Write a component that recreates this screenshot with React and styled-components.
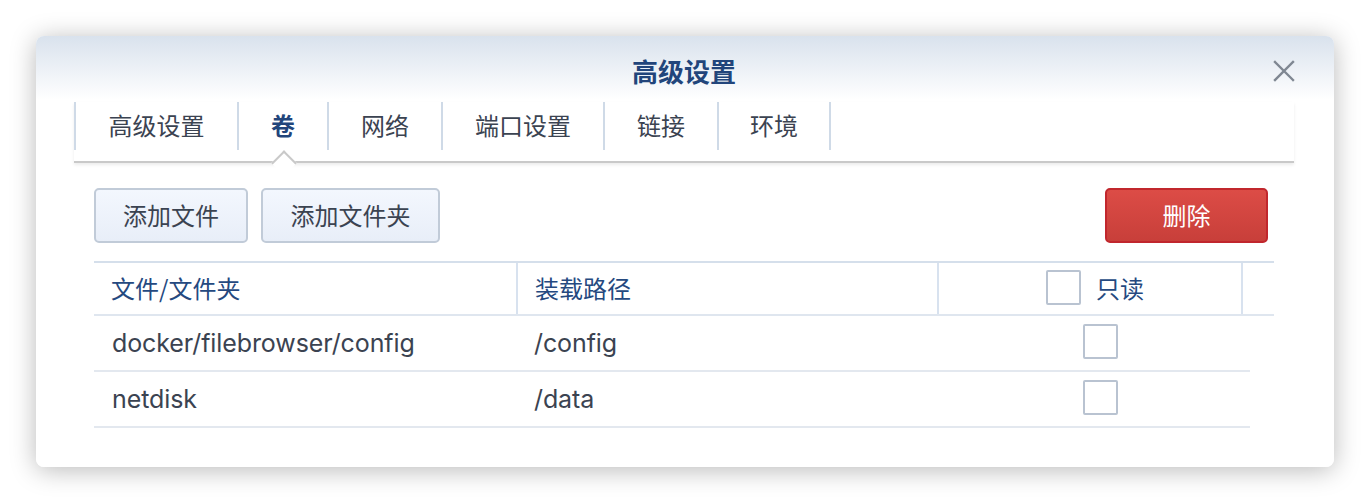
import React from "react";
import styled, { createGlobalStyle } from "styled-components";

const GlobalStyle = createGlobalStyle`
  html, body {
    margin: 0;
    padding: 0;
    background: #ffffff;
  }
  body {
    font-family: "Inter", "Noto Sans CJK SC", sans-serif;
    color: #3b4351;
  }
`;

const Page = styled.div`
  padding: 36px;
`;

const Dialog = styled.div`
  width: 1298px;
  height: 431px;
  box-sizing: border-box;
  border-radius: 8px;
  background: linear-gradient(#d9e2ed 0px, #ffffff 64px);
  box-shadow: 0 3px 26px rgba(0, 0, 0, 0.28);
  padding: 0 40px 0 38px;
`;

const Header = styled.div`
  height: 66px;
  display: grid;
  grid-template-columns: 1fr auto 1fr;
  align-items: center;
`;

const Title = styled.h1`
  grid-column: 2;
  margin: 0;
  padding-top: 3px;
  font-size: 26px;
  font-weight: 700;
  color: #22457b;
  font-family: "Noto Sans CJK SC", sans-serif;
`;

const CloseButton = styled.button`
  justify-self: end;
  margin-right: -3px;
  margin-top: 4px;
  width: 26px;
  height: 26px;
  padding: 0;
  border: none;
  background: none;
  display: flex;
  align-items: center;
  justify-content: center;
`;

const TabBar = styled.div`
  display: flex;
  padding-bottom: 11px;
  border-bottom: 2px solid #c9c9c9;
  box-shadow: 0 2px 3px rgba(0, 0, 0, 0.08);
`;

const Tab = styled.div`
  position: relative;
  height: 48px;
  padding-bottom: 3px;
  width: ${(p) => p.$w}px;
  box-sizing: border-box;
  display: flex;
  align-items: center;
  justify-content: center;
  border-left: 2px solid #cfdae7;
  border-right: ${(p) => (p.$last ? "2px solid #cfdae7" : "none")};
  font-family: "Noto Sans CJK SC", sans-serif;
  font-size: 24px;
  font-weight: ${(p) => (p.$active ? 700 : 400)};
  color: ${(p) => (p.$active ? "#22457b" : "#3b4351")};
`;

const Caret = styled.span`
  position: absolute;
  left: calc(50% - 8px);
  top: calc(100% + 4px);
  width: 16px;
  height: 16px;
  background: #ffffff;
  border-top: 2px solid #c9c9c9;
  border-left: 2px solid #c9c9c9;
  transform: rotate(45deg);
`;

const Content = styled.div`
  padding: 25px 20px 0 20px;
`;

const Toolbar = styled.div`
  display: flex;
  align-items: center;
  gap: 13px;
  margin-bottom: 18px;
`;

const Button = styled.button`
  height: 55px;
  box-sizing: border-box;
  padding: 0 0 2px;
  border-radius: 5px;
  font-family: "Noto Sans CJK SC", sans-serif;
  font-size: 24px;
  cursor: pointer;
  border: 2px solid ${(p) => (p.$danger ? "#c1272d" : "#c1cbd8")};
  color: ${(p) => (p.$danger ? "#ffffff" : "#3b4351")};
  background: ${(p) =>
    p.$danger
      ? "linear-gradient(#dc4c46, #c83f3a)"
      : "linear-gradient(#f3f7fe, #e8eef8)"};
  width: ${(p) => p.$w}px;
  margin-left: ${(p) => (p.$push ? "auto" : "0")};
  margin-right: ${(p) => (p.$push ? "6px" : "0")};
`;

const Table = styled.div`
  width: 100%;
`;

const HeadRow = styled.div`
  display: grid;
  grid-template-columns: 422px 421px 304px 1fr;
  height: 55px;
  box-sizing: border-box;
  border-top: 2px solid #d5dfeb;
  border-bottom: 2px solid #dfe6ef;
`;

const HeadCell = styled.div`
  display: flex;
  align-items: center;
  justify-content: ${(p) => (p.$center ? "center" : "flex-start")};
  gap: 15px;
  padding-left: ${(p) => (p.$center ? "10px" : "17px")};
  padding-bottom: 2px;
  border-left: ${(p) => (p.$first ? "none" : "2px solid #d8e2ef")};
  font-family: "Noto Sans CJK SC", sans-serif;
  font-size: 24px;
  color: #25497f;
`;

const Row = styled.div`
  display: grid;
  grid-template-columns: 422px 421px 1fr;
  width: 1156px;
  height: 56px;
  box-sizing: border-box;
  border-bottom: 2px solid #e3e8ef;
`;

const Cell = styled.div`
  display: flex;
  align-items: center;
  justify-content: ${(p) => (p.$center ? "center" : "flex-start")};
  padding-left: ${(p) => (p.$center ? "14px" : "18px")};
  padding-bottom: ${(p) => (p.$center ? "3px" : "0")};
  font-size: 25px;
  letter-spacing: -0.1px;
  color: #3b4351;
`;

const Check = styled.span`
  display: inline-block;
  flex: none;
  width: 35px;
  height: 35px;
  box-sizing: border-box;
  border: 2px solid #b9c3d1;
  border-radius: 2px;
  background: #ffffff;
`;

const tabs = [
  { label: "高级设置", w: 163 },
  { label: "卷", w: 90, active: true },
  { label: "网络", w: 114 },
  { label: "端口设置", w: 162 },
  { label: "链接", w: 114 },
  { label: "环境", w: 114 },
];

const rows = [
  { file: "docker/filebrowser/config", mount: "/config" },
  { file: "netdisk", mount: "/data" },
];

export default function App() {
  return (
    <Page>
      <GlobalStyle />
      <Dialog>
        <Header>
          <Title>高级设置</Title>
          <CloseButton aria-label="关闭">
            <svg width="22" height="22" viewBox="0 0 22 22">
              <path
                d="M2 2 L20 20 M20 2 L2 20"
                stroke="#7f8792"
                strokeWidth="2.4"
                strokeLinecap="square"
              />
            </svg>
          </CloseButton>
        </Header>
        <TabBar>
          {tabs.map((t, i) => (
            <Tab key={t.label} $w={t.w} $active={t.active} $last={i === tabs.length - 1}>
              {t.label}
              {t.active && <Caret />}
            </Tab>
          ))}
        </TabBar>
        <Content>
          <Toolbar>
            <Button $w={154}>添加文件</Button>
            <Button $w={179}>添加文件夹</Button>
            <Button $danger $push $w={163}>删除</Button>
          </Toolbar>
          <Table>
            <HeadRow>
              <HeadCell $first>文件/文件夹</HeadCell>
              <HeadCell>装载路径</HeadCell>
              <HeadCell $center>
                <Check />
                只读
              </HeadCell>
              <HeadCell />
            </HeadRow>
            {rows.map((r) => (
              <Row key={r.file}>
                <Cell>{r.file}</Cell>
                <Cell>{r.mount}</Cell>
                <Cell $center>
                  <Check />
                </Cell>
              </Row>
            ))}
          </Table>
        </Content>
      </Dialog>
    </Page>
  );
}
